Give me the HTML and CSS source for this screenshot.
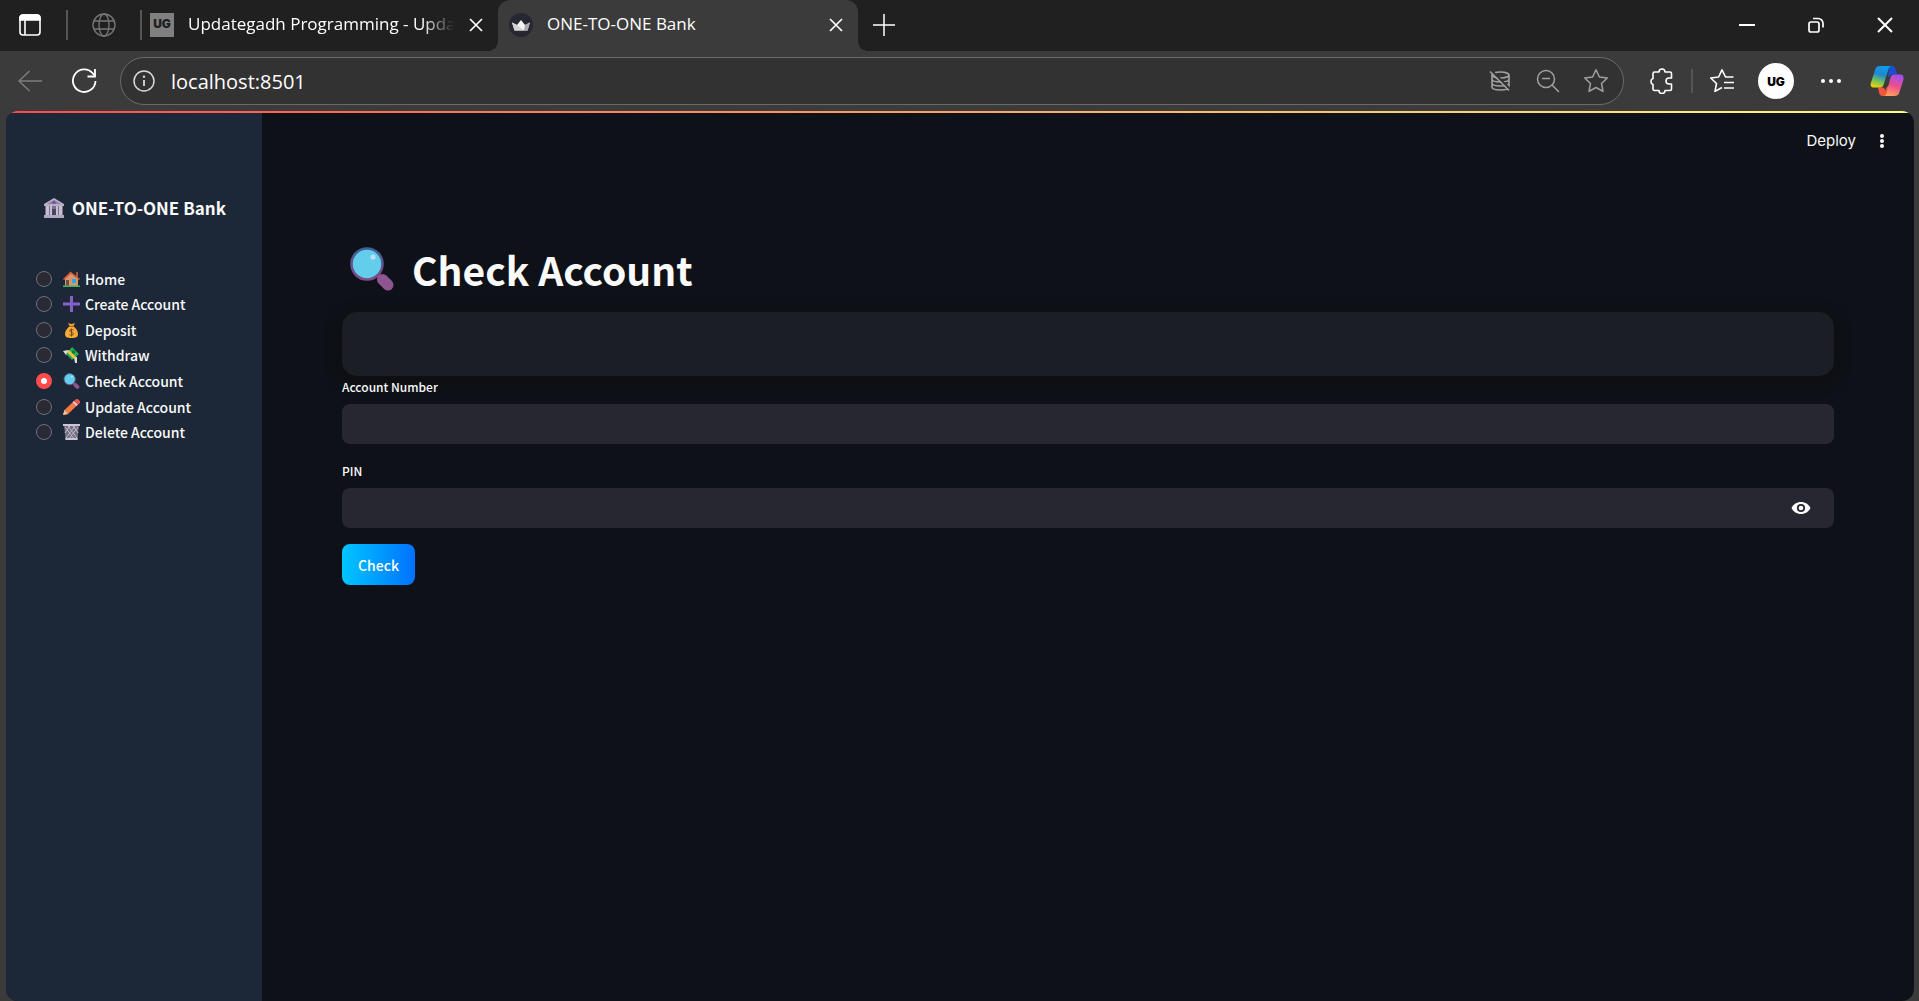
FILE: index.html
```html
<!DOCTYPE html>
<html lang="en">
<head>
    <meta charset="UTF-8">
    <meta name="viewport" content="width=device-width, initial-scale=1.0">
    <title>ONE-TO-ONE Bank</title>
    <link rel="stylesheet" href="styles.css">
</head>
<body>
    <!-- Shared shapes -->
    <svg class="defs" aria-hidden="true">
        <defs>
            <linearGradient id="lensRim" x1="0" y1="0" x2="0" y2="1"><stop offset="0" stop-color="#3c6199"/><stop offset="1" stop-color="#7d4b86"/></linearGradient>
            <linearGradient id="handle" x1="0" y1="0" x2="1" y2="1"><stop offset="0" stop-color="#6b3f7c"/><stop offset="1" stop-color="#a3639d"/></linearGradient>
        </defs>
        <symbol id="magnifier" viewBox="0 0 44 44">
            <path d="M28 28l10 10" stroke="url(#handle)" stroke-width="4"/>
            <path d="M32.500 32.500l5.500 5.500" stroke="#8e5590" stroke-width="11" stroke-linecap="round"/>
            <circle cx="17" cy="17" r="15.500" fill="#62ceec" stroke="url(#lensRim)" stroke-width="2.600"/>
            <circle cx="23" cy="10" r="2.600" fill="#b9e0f8"/>
        </symbol>
        <symbol id="close" viewBox="0 0 16 16"><path d="M2 2l12 12M14 2L2 14" fill="none" stroke="currentColor" stroke-width="1.700"/></symbol>
    </svg>

    <!-- Tab strip -->
    <div class="tab-strip">
        <button class="icon-btn actions-btn" aria-label="Tab actions">
            <svg width="24" height="24" viewBox="0 0 24 24" fill="none" stroke="#fff" stroke-width="1.600"><rect x="2" y="2" width="20" height="20" rx="3"/><path d="M2 5a3 3 0 0 1 3-3h14a3 3 0 0 1 3 3v2H2z" fill="#fff"/><path d="M7 7v15"/></svg>
        </button>
        <span class="divider"></span>
        <button class="icon-btn globe-btn" aria-label="Pinned tab">
            <svg width="24" height="24" viewBox="0 0 24 24" fill="none" stroke="#777" stroke-width="1.300"><circle cx="12" cy="12" r="11"/><ellipse cx="12" cy="12" rx="5" ry="11"/><path d="M2 8h20M2 16h20"/></svg>
        </button>
        <span class="divider"></span>
        <div class="tab">
            <span class="favicon">UG</span>
            <a class="tab-title fade" href="#">Updategadh Programming - Upda</a>
            <button class="icon-btn tab-close" aria-label="Close tab"><svg width="16" height="16"><use href="#close"/></svg></button>
        </div>
        <div class="tab active">
            <svg width="24" height="24" viewBox="0 0 24 24"><circle cx="12" cy="12" r="12" fill="#262730"/><path d="M3 9.500l5 2.500 4-5 4 5 5-2.500-2.500 8h-13z" fill="#f4f4f4"/><path d="M8 12l7 5.500H5.500L3 9.500z" fill="#d2d2d2"/><path d="M16 12l5-2.500-2.500 8H15z" fill="#aaa"/></svg>
            <a class="tab-title" href="#">ONE-TO-ONE Bank</a>
            <button class="icon-btn tab-close" aria-label="Close tab"><svg width="16" height="16"><use href="#close"/></svg></button>
        </div>
        <button class="icon-btn new-tab" aria-label="New tab">
            <svg width="22" height="22" viewBox="0 0 22 22" stroke="#fff" stroke-width="1.500"><path d="M11 0v22M0 11h22"/></svg>
        </button>
        <div class="window-controls">
            <button class="icon-btn" aria-label="Minimize"><svg width="16" height="16" stroke="#fff" stroke-width="2"><path d="M0 8h16"/></svg></button>
            <button class="icon-btn" aria-label="Restore"><svg width="16" height="16" viewBox="0 0 16 16" fill="none" stroke="#fff" stroke-width="1.700"><rect x="1" y="5" width="10" height="10" rx="2"/><path d="M5 1.500h5a5 5 0 0 1 5 5v4"/></svg></button>
            <button class="icon-btn" aria-label="Close"><svg width="16" height="16" viewBox="0 0 16 16" stroke="#fff" stroke-width="2"><path d="M1 1l14 14M15 1L1 15"/></svg></button>
        </div>
    </div>

    <!-- Toolbar -->
    <div class="toolbar">
        <button class="icon-btn back-btn" aria-label="Back">
            <svg width="24" height="24" viewBox="0 0 24 24" fill="none" stroke="#7d7d7d" stroke-width="1.500"><path d="M24 12H1M11.500 2L1 12l10.500 10"/></svg>
        </button>
        <button class="icon-btn reload-btn" aria-label="Refresh">
            <svg width="26" height="26" viewBox="0 0 26 26" fill="none" stroke="#fff" stroke-width="1.800"><path d="M24.500 13a11.300 11.300 0 1 1-3-8l2.500 3"/><path d="M24 1v7.500h-7.500"/></svg>
        </button>
        <div class="address-bar">
            <svg width="22" height="22" viewBox="0 0 22 22" fill="none" stroke="#d8d8d8" stroke-width="1.500"><circle cx="11" cy="11" r="10"/><path d="M11 10v6" stroke-width="1.800"/><circle cx="11" cy="6.700" r="1.200" fill="#d8d8d8" stroke="none"/></svg>
            <input type="text" aria-label="Address" value="localhost:8501">
            <button class="icon-btn" aria-label="Storage blocked">
                <svg width="22" height="22" viewBox="0 0 22 22" fill="none" stroke="#a0a0a0" stroke-width="1.600"><ellipse cx="11.500" cy="5" rx="8.500" ry="3"/><path d="M3 5v12c0 2 4 3 8.500 3s8.500-1 8.500-3V5M3 9c0 2 4 3 8.500 3s8.500-1 8.500-3M3 13c0 2 4 3 8.500 3s8.500-1 8.500-3"/><path d="M3 1l19 19" stroke="#323232" stroke-width="2"/><path d="M1 1.500l19 19"/></svg>
            </button>
            <button class="icon-btn" aria-label="Zoom out">
                <svg width="24" height="24" viewBox="0 0 24 24" fill="none" stroke="#a0a0a0" stroke-width="1.500"><circle cx="10" cy="10" r="8.500"/><path d="M16 16l7 7M6 9.500h8"/></svg>
            </button>
            <button class="icon-btn" aria-label="Add to favorites">
                <svg width="26" height="26" viewBox="0 0 26 26" fill="none" stroke="#a0a0a0" stroke-width="1.500" stroke-linejoin="round"><path d="M13 1.800l3.400 7.200 7.900 1-5.800 5.500 1.500 7.900-7-3.900-7 3.900 1.500-7.900L1.700 10l7.900-1z"/></svg>
            </button>
        </div>
        <button class="icon-btn extensions-btn" aria-label="Extensions">
            <svg width="26" height="26" viewBox="0 0 26 26" fill="none" stroke="#fff" stroke-width="1.600" stroke-linejoin="round"><path d="M4 5.500q0-1.500 1.500-1.500H10a3 3 0 0 1 6 0h5q1.500 0 1.500 1.500v4.500h-2.500a3 3 0 0 0 0 6h2.500v5q0 1.500-1.500 1.500h-5a3 3 0 0 1-6 0H5.500q-1.500 0-1.500-1.500V16.500a3.200 3.200 0 0 1 0-6z"/></svg>
        </button>
        <span class="divider short"></span>
        <button class="icon-btn favorites-btn" aria-label="Favorites">
            <svg width="26" height="26" viewBox="0 0 26 26" fill="none" stroke="#fff" stroke-width="1.600" stroke-linejoin="round"><path d="M24.500 9h-8L13 1.800 9.600 9l-7.900 1 5.800 5.500L6 23.400l7-3.900M15 14.500h10M15 20h10"/></svg>
        </button>
        <button class="avatar" aria-label="Profile">UG</button>
        <button class="icon-btn menu-btn" aria-label="Settings and more">
            <svg width="22" height="6" fill="#fff"><circle cx="3" cy="3" r="2"/><circle cx="11" cy="3" r="2"/><circle cx="19" cy="3" r="2"/></svg>
        </button>
        <button class="icon-btn copilot-btn" aria-label="Copilot">
            <svg width="34" height="32" viewBox="0 0 34 32">
                <defs>
                    <linearGradient id="cpLeft" x1="0.600" y1="0" x2="0.300" y2="1"><stop offset="0" stop-color="#0a9ff0"/><stop offset="0.400" stop-color="#2286d0"/><stop offset="0.700" stop-color="#6fc060"/><stop offset="1" stop-color="#f2cf0c"/></linearGradient>
                    <linearGradient id="cpRight" x1="0.600" y1="0" x2="0.300" y2="1"><stop offset="0" stop-color="#a44ef0"/><stop offset="0.500" stop-color="#ec4f8c"/><stop offset="1" stop-color="#ffa45c"/></linearGradient>
                </defs>
                <path d="M19 1h3c2 0 3 1 3.600 3l1.600 5.500h-4c-3 0-4 1-5 4z" fill="#1c4fd0"/>
                <path d="M8 22.500h4c2.500 0 2.500 1 3.500 3l1-3 3-3-3 9c-.500 1.500-1 2.500-3 2.500-3 0-4-1-4.500-4z" fill="#f2553c"/>
                <path d="M10 1h12c-2 0-3 1-3.500 3l-5 16c-.800 2-2 2.500-4 2.500H4c-3 0-4-2-3-5L5 5c.800-3 2-4 5-4z" fill="url(#cpLeft)"/>
                <path d="M24 31H13c2 0 3-1 3.500-3l4-15.500c.800-2 2-3 4-3H30c3 0 4 2 3.500 5l-4 12.500c-1 3-2.500 4-5.500 4z" fill="url(#cpRight)"/>
            </svg>
        </button>
    </div>

    <!-- App -->
    <div class="app">
        <aside class="sidebar">
            <h2>
                <svg width="20" height="20" viewBox="0 0 20 20"><path d="M10 0l10 6v2H0V6z" fill="#b7afc6"/><path d="M10 2l7 4H3z" fill="#8d849f"/><circle cx="10" cy="4.500" r="1.800" fill="#7a55b0"/><path d="M1 8h18v9H1z" fill="#79718b"/><path d="M2 8h3v9H2zM6 8h2v9H6zM12 8h2v9h-2zM15 8h3v9h-3z" fill="#c6bfd2"/><path d="M8 11h4v6H8z" fill="#4d4260"/><path d="M0 17h20v3H0z" fill="#b1a9bf"/></svg>
                ONE-TO-ONE Bank
            </h2>
            <div class="menu" role="radiogroup" aria-label="Menu">
                <label>
                    <input type="radio" name="menu">
                    <svg width="17" height="16" viewBox="0 0 17 16"><path d="M13 1h2v5h-2z" fill="#a5593f"/><path d="M2 7l6-5 7 5v8H2z" fill="#d69a6a"/><path d="M0 8l7.500-7.500L17 8l-1 1-8-6-7 6z" fill="#dc5a3c"/><path d="M3 9h3v6H3z" fill="#734a50"/><path d="M9 8h4v4H9z" fill="#2aa7f0"/><path d="M0 14.500h17V16H0z" fill="#3fb768"/></svg>
                    Home
                </label>
                <label>
                    <input type="radio" name="menu">
                    <svg width="17" height="16" viewBox="0 0 17 16"><path d="M7 0h3v6.500h7v3h-7V16H7V9.500H0v-3h7z" fill="#8460c8"/></svg>
                    Create Account
                </label>
                <label>
                    <input type="radio" name="menu">
                    <svg width="17" height="16" viewBox="0 0 17 16"><path d="M5 1l3.500 1L12 1l-2 4H7z" fill="#f09a2a"/><path d="M7 4h3c3 2 5 5 5 8s-2 4-6.500 4S2 15 2 12s2-6 5-8z" fill="#f6ad35"/><path d="M6 4.500h5" stroke="#a35a2a"/><path d="M10.500 8C9 7 6.500 7.500 6.700 9s3.800 1 3.800 2.700S7.800 14 6.300 12.500M8.500 6.500v8" fill="none" stroke="#7b4326"/></svg>
                    Deposit
                </label>
                <label>
                    <input type="radio" name="menu">
                    <svg width="17" height="16" viewBox="0 0 17 16"><path d="M0 4l5-1 2 3-4 2zM11 10l3 0v6h-2z" fill="#d9dce4"/><path d="M9 0l7 7-7 6-6-6z" fill="#24ad58"/><path d="M6 3l7 7-2 2-7-7z" fill="#f5c33c"/><circle cx="10.500" cy="5" r="1.700" fill="#0d7b3c"/></svg>
                    Withdraw
                </label>
                <label>
                    <input type="radio" name="menu" checked>
                    <svg width="17" height="16"><use href="#magnifier"/></svg>
                    Check Account
                </label>
                <label>
                    <input type="radio" name="menu">
                    <svg width="17" height="16" viewBox="0 0 17 16"><path d="M0 16l1.500-5L11 2l4 3.500L5 15z" fill="#f47a46"/><path d="M0 16l1.500-5L5 15z" fill="#eec29a"/><path d="M9.500 3.300L11 2l4 3.500L13.500 7z" fill="#d5cadd"/><path d="M11 2l2-2q1.500-.500 3 1t1 3l-2 1.500z" fill="#f0564e"/></svg>
                    Update Account
                </label>
                <label>
                    <input type="radio" name="menu">
                    <svg width="17" height="16" viewBox="0 0 17 16"><path d="M1 1h15l-1.500 15h-12z" fill="#736d80"/><path d="M2 3l10 13M5 2l9 12M10 2l5 7M15 3L5 16M12 2L3 14M7 2L2 9" stroke="#c2bccb"/><path d="M0 0h17v2H0zM2.500 14h12v2h-12z" fill="#cbc5d4"/></svg>
                    Delete Account
                </label>
            </div>
        </aside>

        <main>
            <header>
                <button class="deploy">Deploy</button>
                <button class="icon-btn app-menu" aria-label="Main menu"><svg width="4" height="16" fill="#fafafa"><circle cx="2" cy="3" r="2"/><circle cx="2" cy="8" r="2"/><circle cx="2" cy="13" r="2"/></svg></button>
            </header>
            <div class="content">
                <h1><svg width="44" height="44"><use href="#magnifier"/></svg>Check Account</h1>
                <div class="card"></div>
                <form>
                    <div class="form-group">
                        <label for="account">Account Number</label>
                        <input type="text" id="account">
                    </div>
                    <div class="form-group">
                        <label for="pin">PIN</label>
                        <div class="password">
                            <input type="password" id="pin">
                            <button type="button" class="icon-btn show-pin" aria-label="Show PIN"><svg width="20" height="14" viewBox="0 0 20 14"><path d="M10 1c4.200 0 7.800 2.300 9.500 6-1.700 3.700-5.300 6-9.500 6S2.200 10.700.500 7C2.200 3.300 5.800 1 10 1z" fill="#fafafa"/><circle cx="10" cy="7" r="3.200" fill="#fafafa" stroke="#262730" stroke-width="1.800"/></svg></button>
                        </div>
                    </div>
                    <button type="button" class="btn">Check</button>
                </form>
            </div>
        </main>
    </div>
</body>
</html>
```
FILE: styles.css
```css
* {
    margin: 0;
    padding: 0;
    box-sizing: border-box;
}

body {
    background-color: #3b3b3b;
    color: #fafafa;
    font-family: "Noto Sans CJK SC", "Open Sans", sans-serif;
    display: flex;
    flex-direction: column;
    min-height: 100vh;
}

button {
    border: none;
    background: none;
    color: inherit;
    font-family: inherit;
    cursor: pointer;
}

svg {
    display: block;
    flex-shrink: 0;
}

.defs {
    position: absolute;
    width: 0;
    height: 0;
}

.icon-btn {
    display: flex;
    align-items: center;
    justify-content: center;
    flex-shrink: 0;
}

.divider {
    width: 2px;
    height: 30px;
    background-color: #555;
}

.divider.short {
    height: 24px;
}

/* Tab strip */
.tab-strip {
    display: flex;
    align-items: center;
    height: 51px;
    padding-bottom: 2px;
    background-color: #202020;
    font-family: "Open Sans", sans-serif;
}

.actions-btn {
    width: 60px;
    margin-right: 6px;
}

.globe-btn {
    width: 72px;
}

.tab {
    display: flex;
    align-items: center;
    width: 356px;
    height: 49px;
    padding-left: 8px;
    gap: 14px;
}

.tab.active {
    position: relative;
    align-self: flex-start;
    width: 360px;
    height: 51px;
    padding: 0 0 2px 11px;
    background-color: #3b3b3b;
    border-radius: 12px 12px 0 0;
}

/* curved feet of the selected tab */
.tab.active::before,
.tab.active::after {
    content: "";
    position: absolute;
    bottom: 0;
    width: 10px;
    height: 10px;
}

.tab.active::before {
    left: -10px;
    background: radial-gradient(circle at 0 0, #202020 10px, #3b3b3b 10px);
}

.tab.active::after {
    right: -10px;
    background: radial-gradient(circle at 100% 0, #202020 10px, #3b3b3b 10px);
}

.favicon {
    width: 24px;
    height: 24px;
    background-color: #808080;
    color: #202020;
    font-family: Inter, sans-serif;
    font-size: 12px;
    font-weight: 900;
    line-height: 22px;
    text-align: center;
}

.tab-title {
    flex: 1;
    overflow: hidden;
    white-space: nowrap;
    color: #fff;
    font-size: 17px;
    line-height: 22px;
    padding-bottom: 2px;
    text-decoration: none;
}

.tab-title.fade {
    -webkit-mask-image: linear-gradient(to right, #000 88%, transparent);
    mask-image: linear-gradient(to right, #000 88%, transparent);
}

.tab-close {
    width: 44px;
    height: 44px;
    margin-left: -14px;
    color: #fff;
}

.new-tab {
    width: 52px;
}

.window-controls {
    display: flex;
    margin-left: auto;
}

.window-controls .icon-btn {
    width: 69px;
    height: 48px;
}

/* Toolbar */
.toolbar {
    display: flex;
    align-items: center;
    height: 60px;
    padding-right: 6px;
}

.back-btn {
    width: 60px;
}

.reload-btn {
    width: 48px;
    margin-right: 12px;
}

.address-bar {
    display: flex;
    align-items: center;
    flex: 1;
    height: 48px;
    padding: 0 3px 0 12px;
    background-color: #323232;
    border: 1px solid #6a6a6a;
    border-radius: 24px;
}

.address-bar input {
    flex: 1;
    min-width: 0;
    padding-left: 16px;
    background: none;
    border: none;
    outline: none;
    color: #fff;
    font-family: "Open Sans", sans-serif;
    font-size: 20px;
}

.address-bar .icon-btn {
    width: 48px;
}

.extensions-btn {
    width: 58px;
    margin-left: 9px;
}

.favorites-btn {
    width: 58px;
}

.avatar {
    width: 36px;
    height: 36px;
    margin: 0 7px;
    border-radius: 50%;
    background-color: #fff;
    color: #000;
    font-family: Inter, sans-serif;
    font-size: 12px;
    font-weight: 900;
}

.menu-btn {
    width: 60px;
}

.copilot-btn {
    width: 52px;
}

/* App */
.app {
    display: flex;
    flex: 1;
    margin: 0 5px 0 6px;
    border-radius: 12px;
    overflow: hidden;
    background: linear-gradient(to right, #ff4b4b, #fffd80) top / 100% 2px no-repeat #0e1117;
    padding-top: 2px;
}

.sidebar {
    width: 256px;
    padding: 80px 20px 0 30px;
    background-color: #1c2837;
}

.sidebar h2 {
    display: flex;
    align-items: center;
    gap: 8px;
    height: 30px;
    margin: 0 0 43px 8px;
    font-size: 17px;
    line-height: 30px;
    white-space: nowrap;
}

.menu {
    display: grid;
    grid-auto-rows: 1fr;
    height: 179px;
}

.menu label {
    display: flex;
    align-items: center;
    font-size: 14px;
    font-weight: 500;
    line-height: 24px;
    cursor: pointer;
}

.menu svg {
    margin: 0 5px 0 11px;
}

.menu input {
    appearance: none;
    width: 16px;
    height: 16px;
    border: 1px solid #6b717b;
    border-radius: 50%;
    background-color: #2b2a34;
}

.menu input:checked {
    border: 5px solid #ff4b4b;
    background-color: #fff;
}

main {
    flex: 1;
    min-width: 0;
}

header {
    display: flex;
    align-items: center;
    justify-content: flex-end;
    height: 56px;
    padding-right: 22px;
}

.deploy {
    font-family: Inter, sans-serif;
    font-size: 15px;
    line-height: 24px;
}

.app-menu {
    width: 20px;
    height: 24px;
    margin-left: 16px;
}

.content {
    padding: 73px 80px 80px;
}

h1 {
    display: flex;
    align-items: center;
    gap: 18px;
    height: 54px;
    margin-bottom: 16px;
    padding-left: 8px;
    font-size: 39px;
    line-height: 50px;
}

.card {
    height: 64px;
    border-radius: 15px;
    background-color: #1b1e25;
    box-shadow: 0 4px 15px #0d0f10;
}

.form-group {
    margin-bottom: 16px;
}

.form-group label {
    display: block;
    position: relative;
    height: 24px;
    margin-bottom: 4px;
    font-size: 12px;
    font-weight: 500;
    line-height: 22px;
}

.form-group input {
    display: block;
    width: 100%;
    height: 40px;
    padding: 0 12px;
    background-color: #262730;
    border: none;
    border-radius: 8px;
    color: #fafafa;
    font-size: 14px;
}

.password {
    position: relative;
}

.show-pin {
    position: absolute;
    top: 0;
    right: 13px;
    width: 40px;
    height: 40px;
}

.btn {
    height: 41px;
    padding: 0 16px;
    border-radius: 8px;
    background: linear-gradient(to right, #00c6ff, #0072ff);
    color: #fff;
    font-size: 14px;
    font-weight: 500;
}
```
